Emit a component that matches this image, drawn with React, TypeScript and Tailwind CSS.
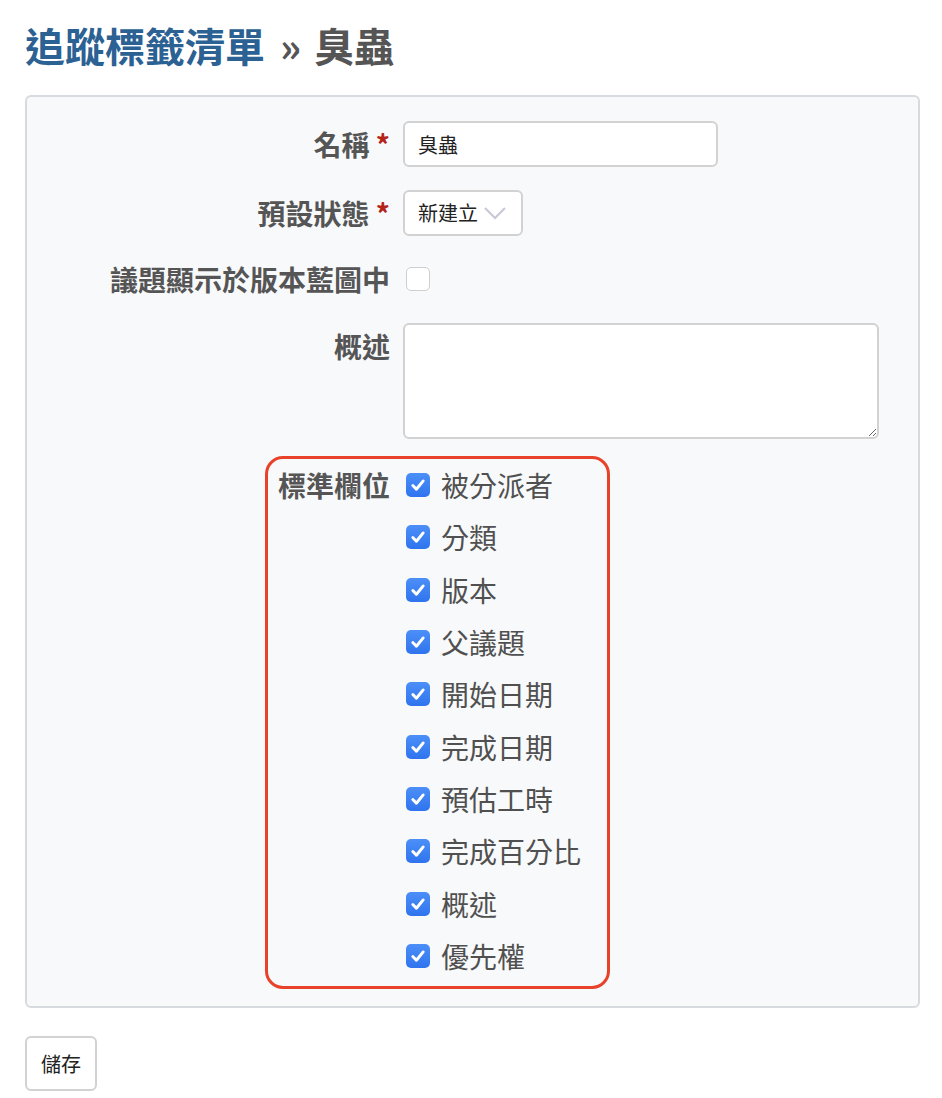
const fields = ["被分派者", "分類", "版本", "父議題", "開始日期", "完成日期", "預估工時", "完成百分比", "概述", "優先權"];

const Check = () => (
  <span className="flex h-[24px] w-[24px] items-center justify-center rounded-[5px] bg-gradient-to-b from-[#4c8ff8] to-[#2f74ee]">
    <svg width="18" height="18" viewBox="0 0 16 16" fill="none">
      <path d="M3.4 8.4 L6.6 11.8 L12.6 4.4" stroke="white" strokeWidth="2.6" strokeLinecap="round" strokeLinejoin="round" />
    </svg>
  </span>
);

const Req = () => <span className="text-[#b42318]"> *</span>;

export default function App() {
  return (
    <div className="min-h-[1098px] bg-white text-[#555] font-['Noto_Sans_CJK_TC','Liberation_Sans',sans-serif]">
      <div className="px-[25px] pt-[21px]">
        <h2 className="text-[40px] font-bold leading-[48px]">
          <span className="text-[#2b6193]">追蹤標籤清單</span>
          <span className="ml-[15px] mr-[13px]">»</span>
          臭蟲
        </h2>

        <div className="mt-[26px] w-[895px] rounded-[6px] border-2 border-[#d7dadf] bg-[#f8f9fb] pt-[24px] pb-[17px]">
          {/* name */}
          <div className="flex items-center">
            <label className="w-[363px] text-right text-[28px] font-bold leading-[34px]">
              名稱<Req />
            </label>
            <input
              readOnly
              value="臭蟲"
              className="ml-[13px] h-[46px] w-[315px] rounded-[6px] border-2 border-[#d2d2d2] bg-white px-[13px] text-[20px] text-[#222] outline-none"
            />
          </div>

          {/* status */}
          <div className="mt-[23px] flex items-center">
            <label className="w-[363px] text-right text-[28px] font-bold leading-[34px]">
              預設狀態<Req />
            </label>
            <div className="ml-[13px] flex h-[46px] w-[120px] items-center rounded-[6px] border-2 border-[#d2d2d2] bg-white pl-[13px] text-[20px] text-[#222]">
              <span>新建立</span>
              <svg className="ml-[5px]" width="24" height="14" viewBox="0 0 24 14" fill="none">
                <path d="M2 2 L12 12 L22 2" stroke="#c9c8d8" strokeWidth="2.2" />
              </svg>
            </div>
          </div>

          {/* roadmap */}
          <div className="mt-[20px] flex h-[46px] items-center">
            <label className="w-[363px] text-right text-[28px] font-bold leading-[34px]">議題顯示於版本藍圖中</label>
            <span className="ml-[16px] h-[24px] w-[24px] rounded-[5px] border-[1.5px] border-[#cfcfcf] bg-white" />
          </div>

          {/* description */}
          <div className="mt-[21px] flex items-start">
            <label className="w-[363px] pt-[6px] text-right text-[28px] font-bold leading-[34px]">概述</label>
            <textarea
              readOnly
              className="ml-[13px] h-[116px] w-[476px] rounded-[6px] border-2 border-[#d2d2d2] bg-white outline-none"
            />
          </div>

          {/* standard fields */}
          <div className="mt-[17px] flex">
            <div className="w-[238px]" />
            <div className="flex w-[345px] items-start rounded-[18px] border-[3px] border-[#e8432a] pb-[4px]">
              <label className="flex h-[52.33px] w-[122px] items-center justify-end text-[28px] font-bold">標準欄位</label>
              <div className="ml-[16px] flex flex-col">
                {fields.map((f) => (
                  <div key={f} className="flex h-[52.33px] items-center">
                    <Check />
                    <span className="ml-[11px] text-[28px] leading-[34px] text-[#505050]">{f}</span>
                  </div>
                ))}
              </div>
            </div>
          </div>
        </div>

        <button className="mt-[28px] h-[55px] w-[72px] rounded-[6px] border-2 border-[#d2d2d2] bg-white text-[20px] text-[#222]">
          儲存
        </button>
      </div>
    </div>
  );
}
